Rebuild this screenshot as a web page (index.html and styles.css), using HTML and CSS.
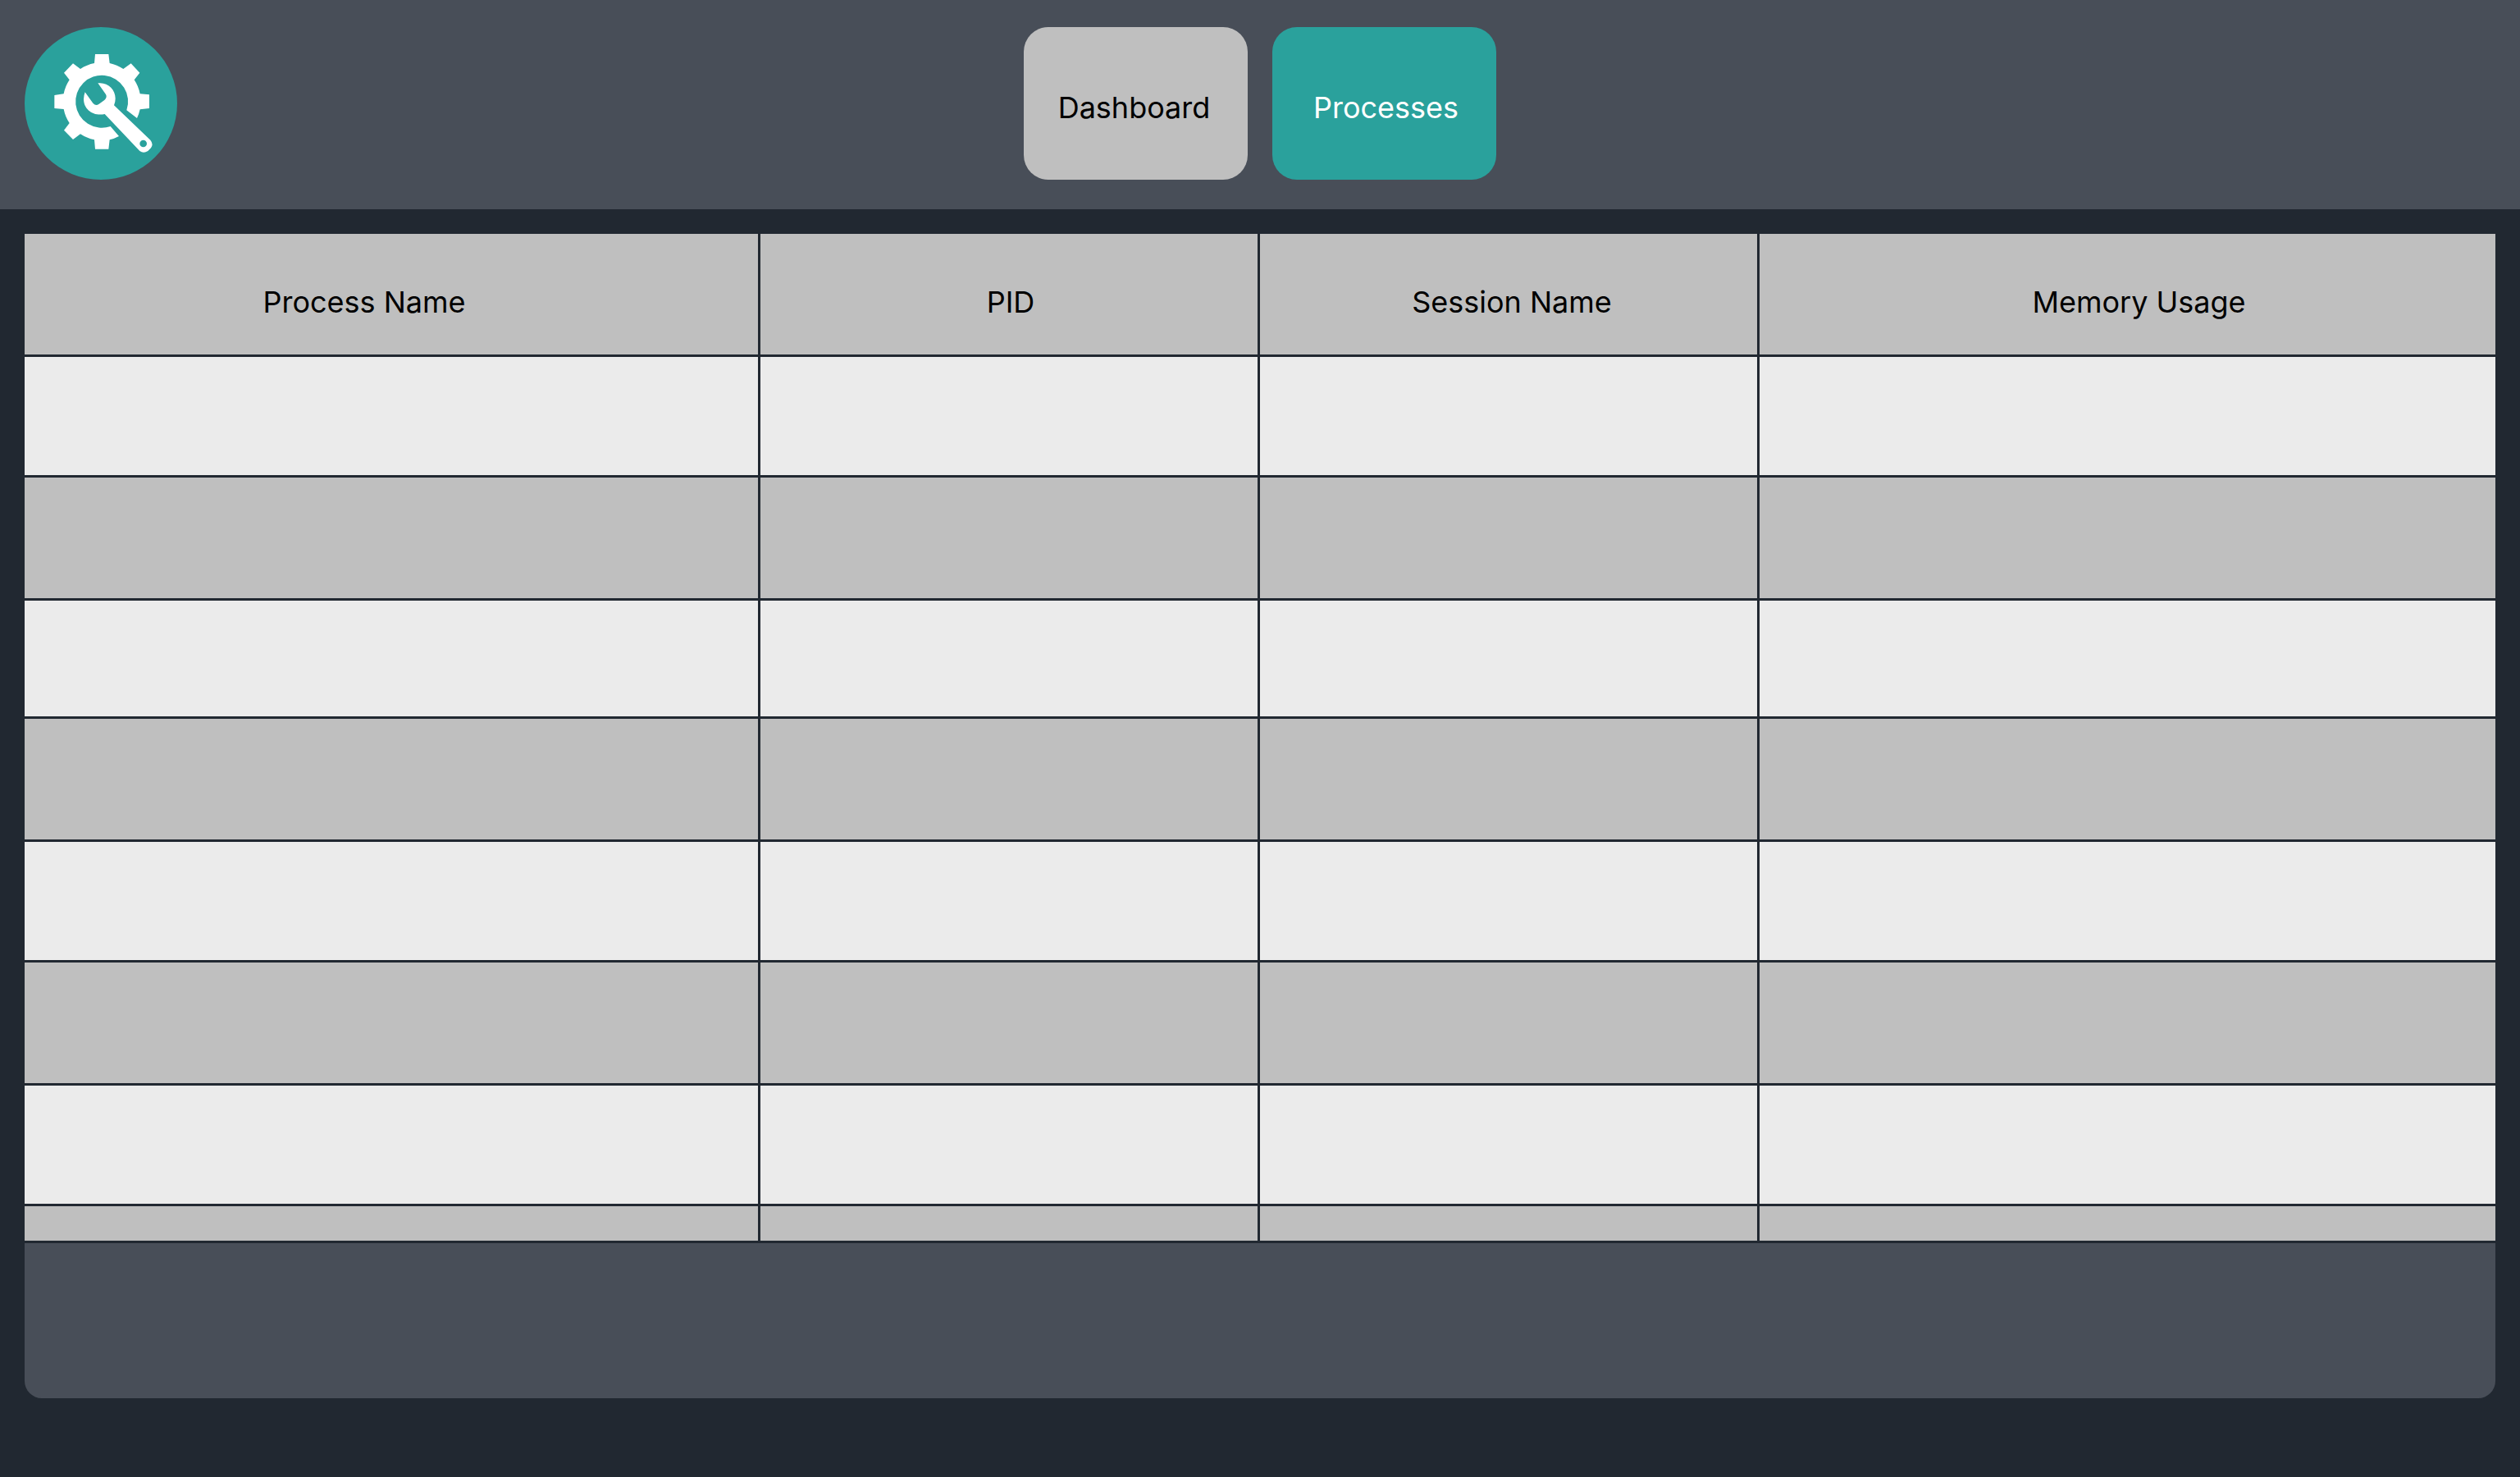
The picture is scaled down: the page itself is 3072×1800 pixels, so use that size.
FILE: index.html
```html
<!DOCTYPE html>
<html lang="en">
<head>
<meta charset="utf-8">
<meta name="viewport" content="width=device-width, initial-scale=1">
<title>Processes</title>
<link rel="stylesheet" href="styles.css">
</head>
<body>
<header class="topbar">
  <svg class="logo" viewBox="90 99 558 558" role="img" aria-label="Task tools">
    <circle class="logo-disc" cx="369" cy="378" r="279"/>
    <path class="logo-mark" d="M348 198H397L401 231A141 141 0 0 1 451 252L479 232L511 266L491 292A141 141 0 0 1 512 343L546 346V396L512 400A141 141 0 0 1 501 432L463 403A96 96 0 1 0 404 462L435 498A141 141 0 0 1 401 511L397 545H348L345 511A141 141 0 0 1 294 490L267 510L234 476L254 450A141 141 0 0 1 233 399L199 396V348L233 343A141 141 0 0 1 254 292L234 266L267 232L294 252A141 141 0 0 1 345 231Z"/>
    <path class="logo-mark" d="M358 304C393 299 422 326 422 360Q422 374 417 385L550 512Q562 527 552 541L541 552Q525 563 511 552L383 417C343 426 306 401 306 362Q306 350 311 337L340 377Q350 388 361 381L382 366Q393 356 387 345Z"/>
    <circle class="logo-disc" cx="524" cy="525" r="13"/>
  </svg>
  <nav class="tabs" aria-label="Views">
    <button class="tab" type="button">Dashboard</button>
    <button class="tab tab-active" type="button" aria-current="page">Processes</button>
  </nav>
</header>
<main class="panel">
  <table class="processes">
    <colgroup>
      <col class="col-wide">
      <col>
      <col>
      <col class="col-wide">
    </colgroup>
    <thead>
      <tr>
        <th class="head-process" scope="col">Process Name</th>
        <th class="head-id" scope="col">PID</th>
        <th class="head-session" scope="col">Session Name</th>
        <th class="head-memory" scope="col">Memory Usage</th>
      </tr>
    </thead>
    <tbody>
      <tr><td></td><td></td><td></td><td></td></tr>
      <tr><td></td><td></td><td></td><td></td></tr>
      <tr class="row-short"><td></td><td></td><td></td><td></td></tr>
      <tr><td></td><td></td><td></td><td></td></tr>
      <tr><td></td><td></td><td></td><td></td></tr>
      <tr><td></td><td></td><td></td><td></td></tr>
      <tr><td></td><td></td><td></td><td></td></tr>
      <tr class="row-cut"><td></td><td></td><td></td><td></td></tr>
    </tbody>
  </table>
  <div class="panel-foot"></div>
</main>
</body>
</html>
```
FILE: styles.css
```css
:root {
  --ink: #212831;
  --slate: #484e58;
  --teal: #2aa19c;
  --grey: #bfbfbf;
  --light: #ebebeb;
}

* {
  box-sizing: border-box;
}

body {
  margin: 0;
  background: var(--ink);
  color: #000;
  font-family: Inter, "Liberation Sans", sans-serif;
  font-size: 36px;
  font-weight: 400;
  line-height: 44px;
}

.topbar {
  display: grid;
  grid-template-columns: 1fr auto 1fr;
  align-items: start;
  padding: 33px 30px 36px;
  background: var(--slate);
}

.logo {
  display: block;
  width: 186px;
  height: 186px;
}

.logo-disc {
  fill: var(--teal);
}

.logo-mark {
  fill: #fff;
}

.tabs {
  display: flex;
  gap: 30px;
}

.tab {
  width: 273px;
  height: 186px;
  padding: 10px 4px 0 0;
  border: 0;
  border-radius: 30px;
  background: var(--grey);
  color: #000;
  font: inherit;
  cursor: pointer;
}

.tab-active {
  padding: 10px 0 0 4px;
  background: var(--teal);
  color: #fff;
}

.panel {
  margin: 30px;
}

.processes {
  width: 100%;
  table-layout: fixed;
  border-collapse: separate;
  border-spacing: 0;
}

.col-wide {
  width: 29.78%;
}

.processes th,
.processes td {
  height: 150px;
  padding: 0;
  border-right: 3px solid var(--ink);
  border-bottom: 3px solid var(--ink);
  background: var(--grey);
}

.processes th {
  padding-top: 18px;
  font-weight: 400;
  text-align: center;
}

.processes th:last-child,
.processes td:last-child {
  border-right: 0;
}

.processes .head-process {
  padding-right: 66px;
}

.processes .head-id {
  padding-left: 4px;
}

.processes .head-session {
  padding-left: 8px;
}

.processes .head-memory {
  padding-left: 28px;
}

.processes tbody tr:nth-child(odd) td {
  height: 147px;
  background: var(--light);
}

.processes tbody .row-short:nth-child(odd) td {
  height: 144px;
}

.processes .row-cut td {
  height: 45px;
}

.panel-foot {
  height: 189px;
  border-radius: 0 0 21px 21px;
  background: var(--slate);
}
```
